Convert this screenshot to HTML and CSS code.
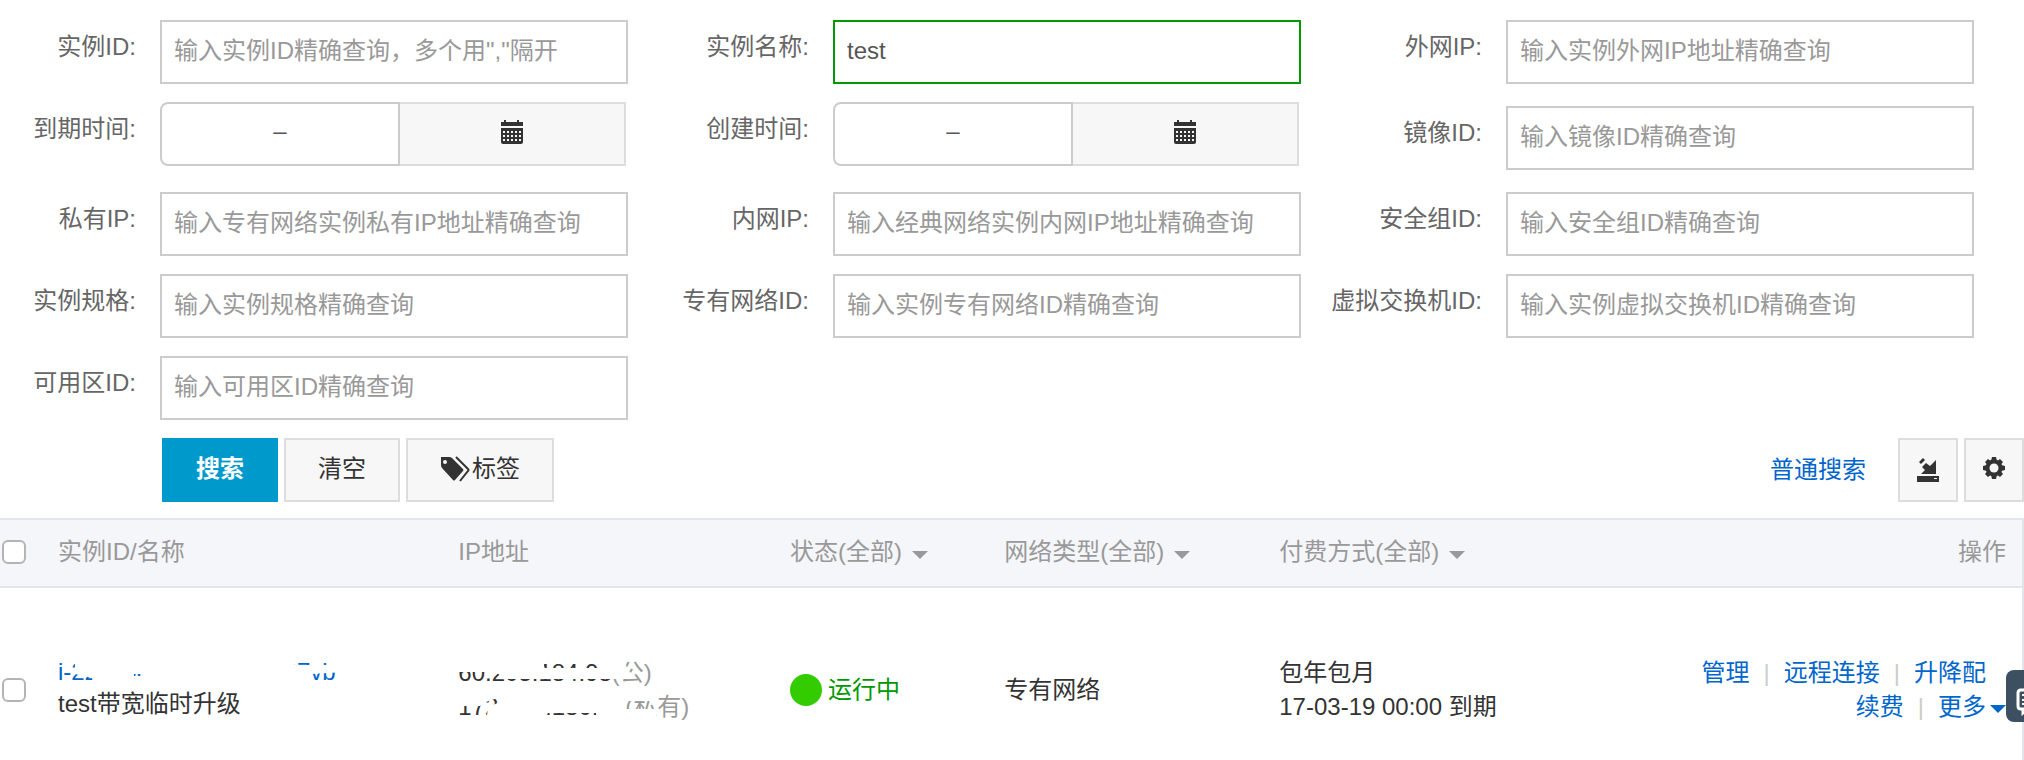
FILE: index.html
```
<!DOCTYPE html>
<html lang="zh-CN">
<head>
    <meta charset="UTF-8">
    <meta name="viewport" content="width=device-width, initial-scale=1.0">
    <title>实例列表</title>
    <link rel="stylesheet" href="styles.css">
</head>
<body>
    <form class="search-form">
        <div class="fields">
            <div class="field">
                <label for="instanceId">实例ID:</label>
                <input type="text" id="instanceId" placeholder='输入实例ID精确查询，多个用","隔开'>
            </div>
            <div class="field">
                <label for="instanceName">实例名称:</label>
                <input type="text" id="instanceName" class="active" value="test">
            </div>
            <div class="field">
                <label for="publicIp">外网IP:</label>
                <input type="text" id="publicIp" placeholder="输入实例外网IP地址精确查询">
            </div>

            <div class="field">
                <label for="expireTime">到期时间:</label>
                <div class="date-group">
                    <input type="text" id="expireTime" value="–">
                    <button type="button" class="date-button" aria-label="选择到期时间">
                        <svg width="24" height="26" viewBox="0 0 24 26"><path fill="#333" fill-rule="evenodd" d="M1 3h3V1h2v2h11V1h2v2h4v4H1zM1 9h22v14q0 2-2 2H3q-2 0-2-2zM3 12v2h2v-2zM7 12v2h2v-2zM11 12v2h2v-2zM15 12v2h2v-2zM19 12v2h2v-2zM3 16v2h2v-2zM7 16v2h2v-2zM11 16v2h2v-2zM15 16v2h2v-2zM19 16v2h2v-2zM3 20v2h2v-2zM7 20v2h2v-2zM11 20v2h2v-2zM15 20v2h2v-2zM19 20v2h2v-2z"/></svg>
                    </button>
                </div>
            </div>
            <div class="field">
                <label for="createTime">创建时间:</label>
                <div class="date-group">
                    <input type="text" id="createTime" value="–">
                    <button type="button" class="date-button" aria-label="选择创建时间">
                        <svg width="24" height="26" viewBox="0 0 24 26"><path fill="#333" fill-rule="evenodd" d="M1 3h3V1h2v2h11V1h2v2h4v4H1zM1 9h22v14q0 2-2 2H3q-2 0-2-2zM3 12v2h2v-2zM7 12v2h2v-2zM11 12v2h2v-2zM15 12v2h2v-2zM19 12v2h2v-2zM3 16v2h2v-2zM7 16v2h2v-2zM11 16v2h2v-2zM15 16v2h2v-2zM19 16v2h2v-2zM3 20v2h2v-2zM7 20v2h2v-2zM11 20v2h2v-2zM15 20v2h2v-2zM19 20v2h2v-2z"/></svg>
                    </button>
                </div>
            </div>
            <div class="field spaced">
                <label for="imageId">镜像ID:</label>
                <input type="text" id="imageId" placeholder="输入镜像ID精确查询">
            </div>

            <div class="field">
                <label for="privateIp">私有IP:</label>
                <input type="text" id="privateIp" placeholder="输入专有网络实例私有IP地址精确查询">
            </div>
            <div class="field">
                <label for="innerIp">内网IP:</label>
                <input type="text" id="innerIp" placeholder="输入经典网络实例内网IP地址精确查询">
            </div>
            <div class="field">
                <label for="groupId">安全组ID:</label>
                <input type="text" id="groupId" placeholder="输入安全组ID精确查询">
            </div>

            <div class="field">
                <label for="spec">实例规格:</label>
                <input type="text" id="spec" placeholder="输入实例规格精确查询">
            </div>
            <div class="field">
                <label for="vpcId">专有网络ID:</label>
                <input type="text" id="vpcId" placeholder="输入实例专有网络ID精确查询">
            </div>
            <div class="field">
                <label for="switchId">虚拟交换机ID:</label>
                <input type="text" id="switchId" placeholder="输入实例虚拟交换机ID精确查询">
            </div>

            <div class="field">
                <label for="zoneId">可用区ID:</label>
                <input type="text" id="zoneId" placeholder="输入可用区ID精确查询">
            </div>
        </div>

        <div class="toolbar">
            <button type="submit" class="button primary">搜索</button>
            <button type="reset" class="button">清空</button>
            <button type="button" class="button">
                <svg width="32" height="26" viewBox="0 0 32 26"><path fill="#333" fill-rule="evenodd" d="M1 1h8q2 0 3 1l11 11q1 1 0 2l-8 9q-1 1-2 0L2 12q-1-1-1-3zM5 4a2 2 0 1 0 2 2a2 2 0 0 0-2-2z"/><path fill="none" stroke="#333" stroke-width="2" d="M16 1l12 12q1 1 0 2l-8 10"/></svg>标签
            </button>
            <a href="#" class="simple-search">普通搜索</a>
            <button type="button" class="button icon" aria-label="导出">
                <svg width="24" height="28" viewBox="0 0 24 28"><path fill="#333" fill-rule="evenodd" d="M3 6l4-4 2 2-4 4zM6 11l4-4 4 3 6-6v14H5l4-4zM1 20h22v6H1zM18 22v1h3v-1z"/></svg>
            </button>
            <button type="button" class="button icon" aria-label="设置">
                <svg width="24" height="28" viewBox="0 0 24 28"><g fill="#333"><circle cx="12" cy="12" r="6" fill="none" stroke="#333" stroke-width="5"/><path d="M10 1h4l1 4H9zM10 23h4l1-4H9zM1 10v4l4 1V9zM23 10v4l-4 1V9zM3 6l3-3 4 3-4 4zM21 6l-3-3-4 3 4 4zM3 18l3 3 4-3-4-4zM21 18l-3 3-4-3 4-4z"/><circle cx="12" cy="12" r="4.500" fill="#f7f7f7"/></g></svg>
            </button>
        </div>
    </form>

    <table class="instances">
        <colgroup>
            <col class="col-check">
            <col class="col-name">
            <col class="col-ip">
            <col class="col-status">
            <col class="col-network">
            <col>
            <col>
        </colgroup>
        <thead>
            <tr>
                <th><input type="checkbox" aria-label="全选"></th>
                <th>实例ID/名称</th>
                <th>IP地址</th>
                <th><button type="button" class="filter">状态(全部)<span class="caret"></span></button></th>
                <th><button type="button" class="filter">网络类型(全部)<span class="caret"></span></button></th>
                <th><button type="button" class="filter">付费方式(全部)<span class="caret"></span></button></th>
                <th class="actions">操作</th>
            </tr>
        </thead>
        <tbody>
            <tr>
                <td><input type="checkbox" aria-label="选择实例"></td>
                <td class="name">
                    <div class="hidden-text">
                        <a href="#">i-2zeb0d4h8n5a6e9b07vb</a>
                        <svg class="eraser" width="300" height="32"><path fill="#fff" fill-rule="evenodd" d="M17 0H236V9H286V16L254 18 252 32H36L34 22 17 18zM76 18h12v2h-12z"/></svg>
                    </div>
                    <div>test带宽临时升级</div>
                </td>
                <td>
                    <div class="hidden-text">
                        <div>60.205.184.98<span class="muted">(公)</span></div>
                        <div>172.173.180.10<span class="muted">(私有)</span></div>
                        <svg class="eraser" width="240" height="68"><path fill="#fff" d="M0 0H86V12H140V0H164L170 14 178 22 176 23H46L38 16H0zM0 34H198V45H168V53H198V68H140L138 57H90L82 68H28L30 51 42 46 40 42 28 46 22 50 0 50z"/></svg>
                    </div>
                </td>
                <td><span class="status"><span class="dot"></span>运行中</span></td>
                <td>专有网络</td>
                <td>包年包月<br>17-03-19 00:00 到期</td>
                <td class="actions">
                    <div class="links first"><a href="#">管理</a><span>|</span><a href="#">远程连接</a><span>|</span><a href="#">升降配</a></div>
                    <div class="links"><a href="#">续费</a><span>|</span><a href="#">更多<i class="caret"></i></a></div>
                </td>
            </tr>
        </tbody>
    </table>

    <button type="button" class="chat" aria-label="咨询">
        <svg width="30" height="30" viewBox="0 0 30 30"><path fill="none" stroke="#fff" stroke-width="3" d="M24 2H5q-3 0-3 3v13q0 3 3 3h2v4l5-4h12"/><path stroke="#fff" stroke-width="2" d="M6 7h14M6 12h14M6 16h14"/></svg>
    </button>
</body>
</html>
```
FILE: styles.css
```
* {
    box-sizing: border-box;
}

body {
    font-family: "Liberation Sans", "Noto Sans CJK SC", sans-serif;
    font-size: 24px;
    line-height: 34px;
    margin: 0;
    background: #fff;
    color: #333;
}

input,
button {
    font-family: inherit;
    font-size: 24px;
    line-height: 34px;
    margin: 0;
}

button {
    cursor: pointer;
}

a {
    color: #06c;
    text-decoration: none;
}

svg {
    display: block;
    flex-shrink: 0;
}

/* search form */
.search-form {
    padding-top: 20px;
}

.fields {
    display: grid;
    grid-template-columns: repeat(3, 1fr);
    row-gap: 18px;
    padding-right: 5px;
}

.field {
    display: flex;
    gap: 24px;
    padding-right: 45px;
}

.field.spaced {
    padding-top: 4px;
    padding-bottom: 4px;
}

/* long labels run out to the left */
.field label {
    display: flex;
    justify-content: flex-end;
    width: 136px;
    flex-shrink: 0;
    line-height: 54px;
    white-space: nowrap;
    color: #666;
}

.field input {
    flex: 1;
    min-width: 0;
    height: 64px;
    padding: 0 12px 2px;
    border: 2px solid #ccc;
    background: #fff;
    color: #555;
    outline: none;
}

.field input::placeholder {
    color: #999;
    opacity: 1;
}

.field input.active {
    border-color: #090;
}

.date-group {
    display: grid;
    grid-template-columns: 240fr 226fr;
    flex: 1;
    padding-right: 2px;
    height: 64px;
}

.date-group input {
    padding-bottom: 6px;
    border-radius: 8px 0 0 8px;
    text-align: center;
}

.date-button {
    display: flex;
    align-items: center;
    justify-content: center;
    padding: 0 0 4px;
    border: 2px solid #ddd;
    border-left: 0;
    background: #f7f7f7;
}

.toolbar {
    display: flex;
    align-items: center;
    gap: 6px;
    padding: 18px 0 16px 162px;
}

.button {
    display: flex;
    align-items: center;
    justify-content: center;
    height: 64px;
    padding: 0 32px 2px;
    border: 2px solid #ddd;
    background: #f7f7f7;
    color: #333;
}

.button.primary {
    border-color: #09c;
    background: #09c;
    color: #fff;
    font-weight: bold;
}

.button.icon {
    width: 60px;
    padding: 0;
}

.simple-search {
    margin-left: auto;
    margin-right: 26px;
}

/* instance table */
.instances {
    width: 100%;
    table-layout: fixed;
    border-spacing: 0;
    border-right: 2px solid #e1e6eb;
}

.col-check {
    width: 58px;
}

.col-name {
    width: 19.8%;
}

.col-ip {
    width: 16.4%;
}

.col-status {
    width: 10.6%;
}

.col-network {
    width: 13.6%;
}

th {
    height: 70px;
    padding: 0 0 2px;
    border-top: 2px solid #e1e6eb;
    border-bottom: 2px solid #e1e6eb;
    background: #f5f6fa;
    color: #999;
    font-weight: normal;
    text-align: left;
}

td {
    padding: 68px 0 36px;
}

td.name {
    padding-bottom: 40px;
    line-height: 32px;
}

th.actions,
td.actions {
    padding-right: 16px;
    text-align: right;
}

input[type="checkbox"] {
    appearance: none;
    display: block;
    width: 24px;
    height: 24px;
    margin-left: 2px;
    border: 2px solid #b4b4b4;
    border-radius: 6px;
    background: #fff;
}

.filter {
    display: flex;
    align-items: center;
    gap: 10px;
    padding: 0;
    border: 0;
    background: none;
    color: #999;
}

.caret {
    display: inline-block;
    border: 8px solid transparent;
    border-top-color: currentColor;
    border-bottom: 0;
}

.filter .caret {
    margin-top: 6px;
}

.muted {
    color: #999;
}

.hidden-text {
    position: relative;
}

/* lies over the ids and addresses that must not be readable */
.eraser {
    position: absolute;
    top: 0;
    left: 0;
}

.status {
    display: flex;
    align-items: center;
    gap: 6px;
    color: #090;
}

.dot {
    width: 32px;
    height: 32px;
    border-radius: 50%;
    background: #3c0;
}

.links span {
    margin: 0 14px;
    color: #ccc;
}

.links.first {
    padding-right: 20px;
}

.links .caret {
    margin-left: 4px;
    vertical-align: middle;
}

.chat {
    position: fixed;
    right: 0;
    top: 670px;
    width: 18px;
    height: 52px;
    padding: 13px 0 0 10px;
    overflow: hidden;
    border: 0;
    border-radius: 8px 0 0 8px;
    background: #3d5061;
}
```
